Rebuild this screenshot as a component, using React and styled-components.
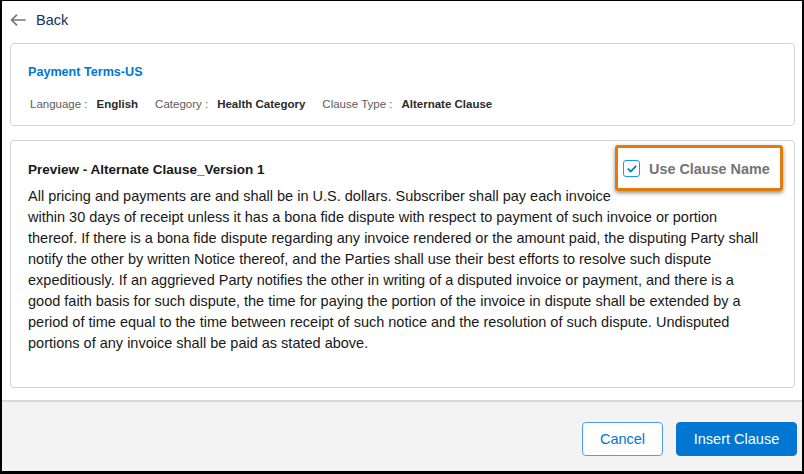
import React from "react";
import styled, { createGlobalStyle } from "styled-components";

const Global = createGlobalStyle`
  html, body { margin: 0; padding: 0; background: #000; }
  body { font-family: "Liberation Sans", Arial, sans-serif; color: #181818; }
  * { box-sizing: border-box; }
`;

const Frame = styled.div`
  margin: 1px 2px 0 2px;
  width: 800px;
  height: 470px;
  background: #fff;
  display: flex;
  flex-direction: column;
  overflow: hidden;
`;

const Header = styled.div`
  height: 42px;
  display: flex;
  align-items: center;
  gap: 10px;
  padding: 0 0 4px 8px;
`;

const BackLabel = styled.span`
  font-size: 14.5px;
  color: #16325c;
`;

const Body = styled.div`
  flex: 1;
  display: flex;
  flex-direction: column;
  gap: 14px;
  padding: 0 7px 0 8px;
`;

const Card = styled.div`
  border: 1px solid #d4d4d4;
  border-radius: 4px;
  background: #fff;
  padding: ${(p) => p.$pad};
  height: ${(p) => p.$h};
`;

const RecordTitle = styled.div`
  font-size: 12.6px;
  line-height: 18px;
  font-weight: 700;
  color: #0176d3;
`;

const Meta = styled.div`
  margin-top: 15px;
  display: flex;
  gap: 17px;
  font-size: 11.5px;
  line-height: 16px;
  padding-left: 2px;
`;

const MetaItem = styled.div`
  display: flex;
  gap: 9px;
`;

const MetaLabel = styled.span`
  color: #5c5c5c;
`;

const MetaValue = styled.span`
  font-weight: 700;
  color: #2b2b2b;
`;

const Highlight = styled.div`
  float: right;
  margin: -16px -19px 0 0;
  width: 168px;
  height: 46px;
  border: 3px solid #e07b0e;
  border-radius: 3px;
  box-shadow: 0 2px 4px rgba(0, 0, 0, 0.45);
  display: flex;
  align-items: center;
  gap: 9px;
  padding: 1px 0 0 5px;
`;

const Box = styled.span`
  width: 17px;
  height: 17px;
  border: 1px solid #1b96ff;
  border-radius: 3px;
  display: flex;
  align-items: center;
  justify-content: center;
  background: #fff;
`;

const CheckLabel = styled.span`
  font-size: 14.4px;
  font-weight: 700;
  color: #747474;
`;

const PreviewTitle = styled.div`
  font-size: 13.5px;
  line-height: 18px;
  font-weight: 700;
  color: #181818;
`;

const Text = styled.p`
  margin: 7px 0 0;
  font-size: 14.5px;
  line-height: 21px;
  color: #181818;
`;

const Footer = styled.div`
  height: 71px;
  border-top: 2px solid #d8d8d8;
  background: #f3f3f3;
  display: flex;
  justify-content: flex-end;
  align-items: flex-start;
  gap: 13px;
  padding: 20px 5px 0 0;
`;

const Button = styled.button`
  height: 34px;
  padding: 0;
  border-radius: 4px;
  border: 1px solid ${(p) => (p.$primary ? "#0176d3" : "#4b9fe4")};
  background: ${(p) => (p.$primary ? "#0176d3" : "#fff")};
  color: ${(p) => (p.$primary ? "#fff" : "#0176d3")};
  font-family: inherit;
  font-size: 14.5px;
  width: ${(p) => p.$w};
`;

export default function App() {
  return (
    <>
      <Global />
      <Frame>
        <Header>
          <svg width="16" height="12" viewBox="0 0 16 12" fill="none">
            <path d="M15 6H1.8M6.5 1.2L1.5 6l5 4.8" stroke="#747474" strokeWidth="1.7" strokeLinecap="round" strokeLinejoin="round" />
          </svg>
          <BackLabel>Back</BackLabel>
        </Header>
        <Body>
          <Card $pad="19px 18px 0 17px" $h="83px">
            <RecordTitle>Payment Terms-US</RecordTitle>
            <Meta>
              <MetaItem>
                <MetaLabel>Language :</MetaLabel>
                <MetaValue>English</MetaValue>
              </MetaItem>
              <MetaItem>
                <MetaLabel>Category :</MetaLabel>
                <MetaValue>Health Category</MetaValue>
              </MetaItem>
              <MetaItem>
                <MetaLabel>Clause Type :</MetaLabel>
                <MetaValue>Alternate Clause</MetaValue>
              </MetaItem>
            </Meta>
          </Card>
          <Card $pad="20px 30px 0 17px" $h="248px">
            <Highlight>
              <Box>
                <svg width="10" height="8" viewBox="0 0 10 8" fill="none">
                  <path d="M1.3 4.2L3.8 6.5L8.7 1.3" stroke="#0176d3" strokeWidth="1.8" strokeLinecap="round" strokeLinejoin="round" />
                </svg>
              </Box>
              <CheckLabel>Use Clause Name</CheckLabel>
            </Highlight>
            <PreviewTitle>Preview - Alternate Clause_Version 1</PreviewTitle>
            <Text>
              All pricing and payments are and shall be in U.S. dollars. Subscriber shall pay each invoice within 30 days of receipt unless it has a bona fide dispute with respect to payment of such invoice or portion thereof. If there is a bona fide dispute regarding any invoice rendered or the amount paid, the disputing Party shall notify the other by written Notice thereof, and the Parties shall use their best efforts to resolve such dispute expeditiously. If an aggrieved Party notifies the other in writing of a disputed invoice or payment, and there is a good faith basis for such dispute, the time for paying the portion of the invoice in dispute shall be extended by a period of time equal to the time between receipt of such notice and the resolution of such dispute. Undisputed portions of any invoice shall be paid as stated above.
            </Text>
          </Card>
        </Body>
        <Footer>
          <Button $w="81px">Cancel</Button>
          <Button $primary $w="121px">Insert Clause</Button>
        </Footer>
      </Frame>
    </>
  );
}
